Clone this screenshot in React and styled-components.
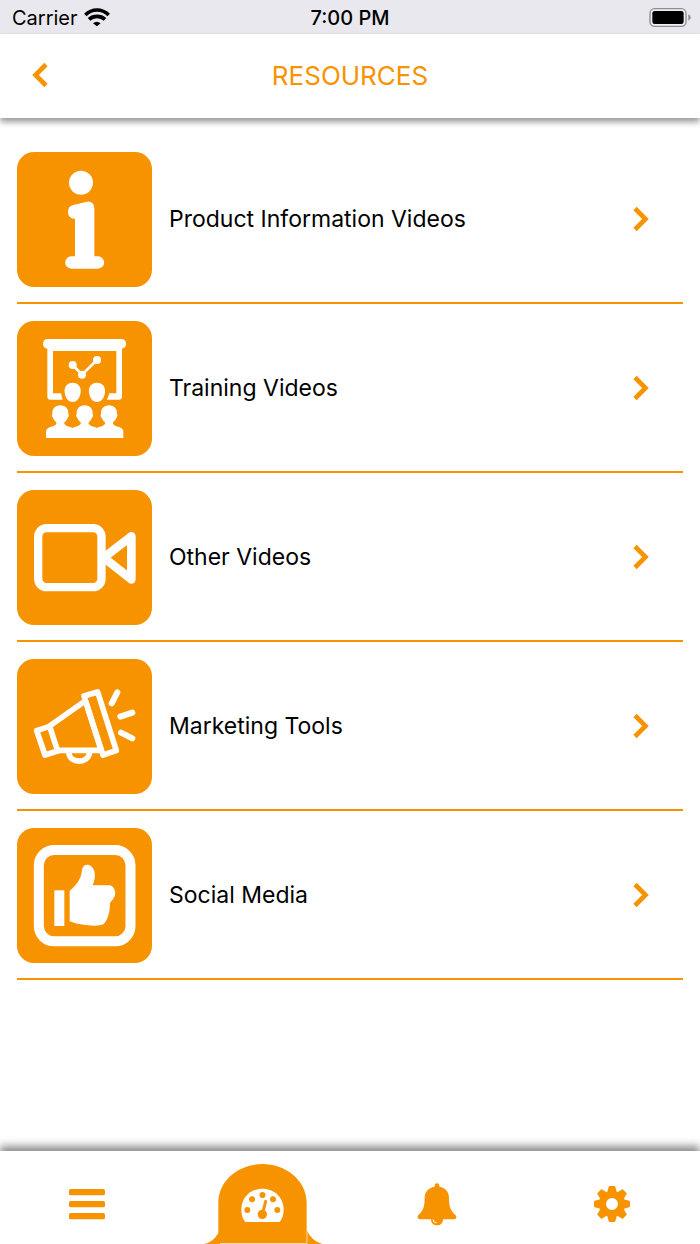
import React from 'react';
import styled, { createGlobalStyle, css } from 'styled-components';

const ORANGE = '#f89300';

const GlobalStyle = createGlobalStyle`
  *, *::before, *::after { box-sizing: border-box; }
  body {
    margin: 0;
    background: #fff;
    color: #000;
    font-family: Inter, "Liberation Sans", sans-serif;
  }
  button { font: inherit; color: inherit; border: 0; background: none; padding: 0; cursor: pointer; }
  svg { display: block; }
`;

const Screen = styled.div`
  min-height: 100vh;
  display: flex;
  flex-direction: column;
`;

const StatusBar = styled.div`
  display: grid;
  grid-template-columns: 1fr auto 1fr;
  align-items: center;
  height: 34px;
  padding: 2px 9px 0;
  background: #e9e8ee;
  font-size: 20px;
  line-height: 32px;
`;

const Carrier = styled.div`
  display: flex;
  align-items: center;
  gap: 6px;
  padding-left: 3px;
`;

const Clock = styled.time`
  font-weight: 500;
`;

const Battery = styled.div`
  justify-self: end;
`;

const Header = styled.header`
  display: grid;
  grid-template-columns: 48px 1fr 48px;
  align-items: center;
  height: 84px;
  padding: 0 16px;
  box-shadow: 0 4px 6px rgba(0, 0, 0, 0.4);
`;

const BackButton = styled.button`
  display: flex;
  align-items: center;
  justify-content: center;
  height: 48px;
`;

const Title = styled.h1`
  margin: 0;
  color: ${ORANGE};
  font-size: 26px;
  line-height: 32px;
  font-weight: 400;
  text-align: center;
`;

const List = styled.ul`
  flex: 1;
  margin: 0;
  padding: 17px 17px 32px;
  list-style: none;
`;

const Row = styled.li`
  border-bottom: 2px solid ${ORANGE};
`;

const RowLink = styled.a`
  display: flex;
  align-items: center;
  gap: 17px;
  padding: 17px 34px 15px 0;
  color: #000;
  text-decoration: none;
`;

const Tile = styled.span`
  flex: none;
  width: 135px;
  height: 135px;
  border-radius: 17px;
  background: ${ORANGE};
  overflow: hidden;
`;

const Label = styled.span`
  flex: 1;
  padding-bottom: 2px;
  font-size: 23px;
  line-height: 32px;
`;

const TabBar = styled.nav`
  display: grid;
  grid-template-columns: repeat(4, 1fr);
  height: 93px;
  padding-right: 1px;
  box-shadow: 0 -5px 8px rgba(0, 0, 0, 0.45);
`;

const Tab = styled.button`
  display: flex;
  justify-content: center;
  align-items: center;
  padding-top: 13px;
  ${(p) => p.$active && css`
    align-items: flex-end;
  `}
`;

function Chevron({ left }) {
  return (
    <svg width="16" height="28" viewBox="0 0 16 28" fill="none" stroke={ORANGE} strokeWidth="4.6" aria-hidden="true">
      <path d={left ? 'M14 2.5L3.5 13L14 23.5' : 'M2 2.5L12.5 13L2 23.5'} />
    </svg>
  );
}

function WifiIcon() {
  return (
    <svg width="26" height="20" viewBox="253 24 78 60" fill="none" stroke="#000" strokeWidth="11" aria-hidden="true">
      <path d="M257 45C277 25 307 25 327 45" />
      <path d="M268 58C281 46 303 46 316 58" />
      <path d="M280 70Q291 60 303 70L291.500 79Z" fill="#000" stroke="none" />
    </svg>
  );
}

function BatteryIcon() {
  return (
    <svg width="42" height="20" viewBox="268 24 126 60" aria-hidden="true">
      <rect x="271" y="26" width="108" height="53" rx="14" fill="#efeef3" stroke="#8d8c92" strokeWidth="4" />
      <rect x="278" y="33" width="94" height="39" rx="7" />
      <path d="M386 43Q393 46 393 52.500T386 62Z" fill="#8d8c92" />
    </svg>
  );
}

function TileArt({ children, ...rest }) {
  return (
    <svg width="135" height="135" viewBox="21 18 405 405" fill="#fff" aria-hidden="true" {...rest}>
      {children}
    </svg>
  );
}

const stroke = { fill: 'none', stroke: '#fff', strokeLinejoin: 'round', strokeLinecap: 'round' };

const InfoArt = () => (
  <TileArt>
    <circle cx="213" cy="110" r="36" />
    <path d="M190 177L231 167Q252 165 253 187V331H264A18 18 0 0 1 264 368H184A18 18 0 0 1 184 331H195V218H191A21 21 0 0 1 190 177Z" />
  </TileArt>
);

const head = 'M0 0C16 0 25 11 24 25Q28 31 22 38Q18 47 12 51V56Q18 63 30 65Q42 69 43 78V98H-43V78Q-42 69 -30 65Q-18 63 -12 56V51Q-18 47 -22 38Q-28 31 -24 25C-25 11 -16 0 0 0Z';
const backHead = 'M0 0C17 0 26 13 24 29C22 47 13 58 0 58S-22 47 -24 29C-26 13 -17 0 0 0Z';

const TrainingArt = () => (
  <TileArt>
    <rect x="99" y="72" width="249" height="29" rx="14" />
    <path d="M112 98V245Q112 254 121 254H158L153 235H129V108H319V235H298L291 254H327Q336 254 336 245V98Z" />
    <path d="M188 150L216 179L261 135" {...stroke} strokeWidth="8" />
    <circle cx="188" cy="150" r="12" />
    <circle cx="216" cy="179" r="12" />
    <circle cx="261" cy="135" r="12" />
    <path d={backHead} transform="translate(188 203)" />
    <path d={backHead} transform="translate(261 203)" />
    <path d={head} transform="translate(151 271)" />
    <path d={head} transform="translate(224 271)" />
    <path d={head} transform="translate(297 271)" />
  </TileArt>
);

const CameraArt = () => (
  <TileArt>
    <rect x="84.500" y="132.500" width="190" height="177" rx="25" {...stroke} strokeWidth="25" />
    <path d="M281 221L364 157V286Z" {...stroke} strokeWidth="26" />
  </TileArt>
);

const MegaphoneArt = () => (
  <TileArt>
    <g {...stroke} strokeWidth="17">
      <path d="M80 233L119 220L143 294L105 306Z" />
      <path d="M222 129L263 117L319 293L279 306Z" />
      <path d="M123 216L221 147M144 292H272M227 146L273 291M176 298C180 333 234 333 239 298" />
      <path d="M322 118L305 151M331 191L367 179M333 239L367 256" strokeWidth="18" />
    </g>
  </TileArt>
);

const ThumbArt = () => (
  <TileArt>
    <rect x="86.500" y="84" width="275" height="274" rx="46" {...stroke} strokeWidth="30" />
    <rect x="133" y="205" width="30" height="107" />
    <path d="M179 207Q212 179 215 151Q216 129 231 128C252 128 263 158 248 190H299Q310 191 315 207C318 225 309 230 300 243C300 272 292 296 281 306C268 315 214 312 179 298Z" />
  </TileArt>
);

function MenuIcon() {
  return (
    <svg width="36" height="32" viewBox="207 161 108 96" fill={ORANGE} aria-hidden="true">
      <rect x="207" y="164" width="108" height="19" rx="5" />
      <rect x="207" y="200" width="108" height="19" rx="5" />
      <rect x="207" y="236" width="108" height="19" rx="5" />
    </svg>
  );
}

function DashboardIcon() {
  return (
    <svg width="120" height="80" viewBox="606 90 360 240" fill={ORANGE} aria-hidden="true">
      <path d="M612 330Q640 325 655 297V207C655 137 719 90 787 90S920 137 920 207V287Q935 322 969 330Z" />
      <path d="M660 328.500H921V287" fill="none" stroke="#fff" strokeWidth="2" />
      <path d="M736 264Q724 249 724 228C724 190 752 164 787.500 164S851 190 851 228Q851 249 839 264Z" fill="#fff" />
      <circle cx="742" cy="228" r="9" />
      <circle cx="756" cy="196" r="9" />
      <circle cx="787.500" cy="183" r="9" />
      <circle cx="819" cy="196" r="9" />
      <circle cx="832" cy="228" r="9" />
      <circle cx="787" cy="241" r="14" />
      <path d="M788 237L797 202" stroke={ORANGE} strokeWidth="9" strokeLinecap="round" />
    </svg>
  );
}

function BellIcon() {
  return (
    <svg width="40" height="44" viewBox="203 143 120 132" fill={ORANGE} aria-hidden="true">
      <path d="M256 157V153Q256 147 263 147T270 153V157C290 161 299 173 299 191C299 216 303 229 319 243Q325 251 315 255H281C281 267 273 273 263 273S245 267 245 255H211Q201 251 207 243C222 229 226 216 226 191C226 173 236 161 256 157Z" />
      <path d="M251 256Q252 265 262 266" fill="none" stroke="#fff" strokeWidth="3" />
    </svg>
  );
}

function GearIcon() {
  return (
    <svg width="38" height="38" viewBox="-57 -57 114 114" fill={ORANGE} aria-hidden="true">
      {[0, 45, 90, 135, 180, 225, 270, 315].map((angle) => (
        <path key={angle} d="M-15 -32L-10 -52Q-9 -54 -7 -54H7Q9 -54 10 -52L15 -32Z" transform={`rotate(${angle})`} />
      ))}
      <path fillRule="evenodd" d="M0 -39A39 39 0 1 1 0 39A39 39 0 1 1 0 -39ZM0 -18A18 18 0 1 0 0 18A18 18 0 1 0 0 -18Z" />
    </svg>
  );
}

const resources = [
  { label: 'Product Information Videos', Art: InfoArt },
  { label: 'Training Videos', Art: TrainingArt },
  { label: 'Other Videos', Art: CameraArt },
  { label: 'Marketing Tools', Art: MegaphoneArt },
  { label: 'Social Media', Art: ThumbArt },
];

const tabs = [
  { name: 'Menu', Icon: MenuIcon },
  { name: 'Dashboard', Icon: DashboardIcon, active: true },
  { name: 'Notifications', Icon: BellIcon },
  { name: 'Settings', Icon: GearIcon },
];

export default function App() {
  return (
    <>
      <GlobalStyle />
      <Screen>
        <StatusBar>
          <Carrier>Carrier <WifiIcon /></Carrier>
          <Clock>7:00 PM</Clock>
          <Battery><BatteryIcon /></Battery>
        </StatusBar>
        <Header>
          <BackButton aria-label="Back"><Chevron left /></BackButton>
          <Title>RESOURCES</Title>
        </Header>
        <List>
          {resources.map(({ label, Art }) => (
            <Row key={label}>
              <RowLink href="#">
                <Tile><Art /></Tile>
                <Label>{label}</Label>
                <Chevron />
              </RowLink>
            </Row>
          ))}
        </List>
        <TabBar>
          {tabs.map(({ name, Icon, active }) => (
            <Tab key={name} aria-label={name} $active={active} aria-current={active ? 'page' : undefined}>
              <Icon />
            </Tab>
          ))}
        </TabBar>
      </Screen>
    </>
  );
}
